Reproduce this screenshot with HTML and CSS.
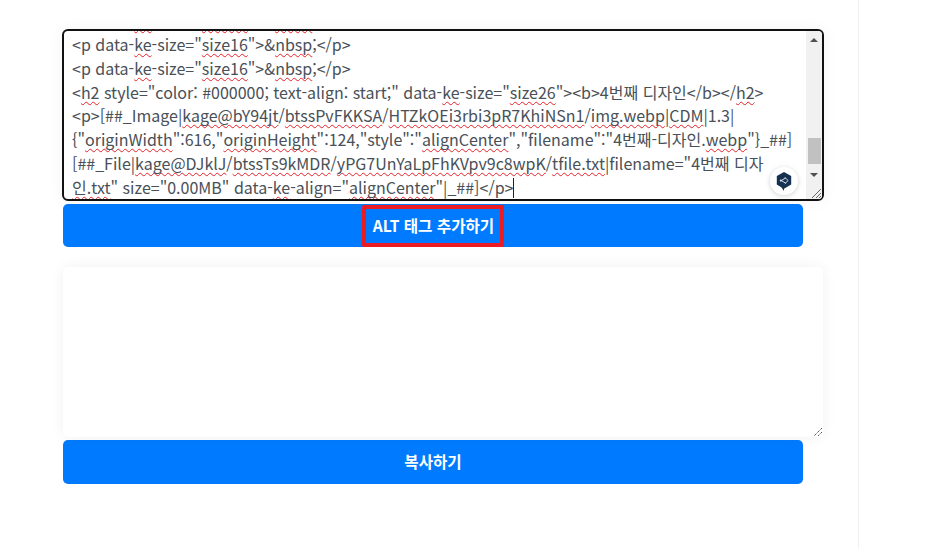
FILE: index.html
```html
<!DOCTYPE html>
<html lang="ko">
<head>
<meta charset="utf-8">
<title>ALT 태그 추가하기</title>
<link rel="stylesheet" href="styles.css">
</head>
<body>
<div class="page">
  <main class="main">
    <div class="editor">
      <div class="code">
        <div class="scrolled">
          <div class="line">&lt;p data-<span class="sp">ke</span>-size="<span class="sp">size16</span>"&gt;&amp;<span class="sp">nbsp</span>;&lt;/p&gt;</div>
          <div class="line">&lt;p data-<span class="sp">ke</span>-size="<span class="sp">size16</span>"&gt;&amp;<span class="sp">nbsp</span>;&lt;/p&gt;</div>
          <div class="line">&lt;p data-<span class="sp">ke</span>-size="<span class="sp">size16</span>"&gt;&amp;<span class="sp">nbsp</span>;&lt;/p&gt;</div>
          <div class="line">&lt;<span class="sp">h2</span> style="color: #000000; text-align: start;" data-<span class="sp">ke</span>-size="<span class="sp">size26</span>"&gt;&lt;b&gt;4번째 디자인&lt;/b&gt;&lt;/<span class="sp">h2</span>&gt;</div>
          <div class="line">&lt;p&gt;[##_Image|<span class="sp">kage@bY94jt</span>/<span class="sp">btssPvFKKSA</span>/<span class="sp">HTZkOEi3rbi3pR7KhiNSn1</span>/<span class="sp">img.webp</span>|<span class="sp">CDM</span>|1.3|</div>
          <div class="line">{"<span class="sp">originWidth</span>":616,"<span class="sp">originHeight</span>":124,"style":"<span class="sp">alignCenter</span>","filename":"4번째-디자인.<span class="sp">webp</span>"}_##]</div>
          <div class="line">[##_File|<span class="sp">kage@DJklJ</span>/<span class="sp">btssTs9kMDR</span>/<span class="sp">yPG7UnYaLpFhKVpv9c8wpK</span>/<span class="sp">tfile.txt</span>|filename="4번째 디자</div>
          <div class="line"><span class="sp">인.txt</span>" size="0.00MB" data-<span class="sp">ke</span>-align="<span class="sp">alignCenter</span>"|_##]&lt;/p&gt;<span class="caret"></span></div>
        </div>
      </div>
      <div class="scrollbar">
        <div class="arrow up"></div>
        <div class="track"><div class="thumb"></div></div>
        <div class="arrow down"></div>
        <div class="corner">
          <svg width="15" height="15" viewBox="0 0 15 15"><path d="M14 5 5 14M14 9 9 14M14 12 12 14" stroke="#666" stroke-width="1" fill="none"/></svg>
        </div>
      </div>
      <div class="badge">
        <svg width="20" height="22" viewBox="0 0 20 22">
          <path d="M10 1 18 5.5V15L10 19.5V22L7 18 2 15V5.5Z" fill="#16304f"/>
          <path d="M7 10.5 12 7.5M7 10.5 12 13.5M11 7 14.5 10.5 11 14" stroke="#d6e2ee" stroke-width="1.1" fill="none"/>
          <circle cx="6.5" cy="10.5" r="1.2" fill="#d6e2ee"/>
        </svg>
      </div>
    </div>
    <button class="btn btn-alt" type="button"><span class="btn-mark">ALT 태그 추가하기</span></button>
    <div class="output">
      <svg class="grip" width="10" height="10" viewBox="0 0 10 10"><path d="M9 1 1 9M9 5 5 9" stroke="#555" stroke-width="1" stroke-dasharray="1.4 .7" fill="none"/></svg>
    </div>
    <button class="btn btn-copy" type="button">복사하기</button>
  </main>
  <aside class="aside"></aside>
</div>
</body>
</html>
```
FILE: styles.css
```css
* { box-sizing: border-box; }
html, body { margin: 0; height: 100%; background: #fff; overflow: hidden; }
body { font-family: "Noto Sans CJK KR", "Noto Sans", sans-serif; }
.page { display: flex; height: 548px; }
.main { width: 858px; padding: 29px 0 0 62px; flex: none; }
.aside { flex: 1; border-left: 1px solid #f0f0f0; }
.editor {
  position: relative; display: flex; width: 762px; height: 172px;
  border: 2px solid #111; border-radius: 6px; background: #fff; overflow: hidden;
  box-shadow: 0 0 15px rgba(0,0,0,.05);
}
.code {
  flex: 1; min-width: 0; padding: 0 0 0 8px; color: #495057;
  font-size: 16px; line-height: 23.75px; overflow: hidden;
}
.scrolled { margin-top: -21.75px; }
.line { height: 23.75px; white-space: pre; }
.sp { text-decoration: underline wavy #e62129 1.4px; text-underline-offset: 1.5px; text-decoration-skip-ink: none; }
.caret { display: inline-block; width: 1px; height: 20px; background: #222; vertical-align: -4px; }
.scrollbar { width: 16px; flex: none; display: flex; flex-direction: column; background: #f1f1f1; }
.arrow { height: 17px; flex: none; display: flex; align-items: center; justify-content: center; }
.arrow::before { content: ""; border-left: 4px solid transparent; border-right: 4px solid transparent; }
.arrow.up::before { border-bottom: 4px solid #505050; }
.arrow.down::before { border-top: 4px solid #505050; }
.track { flex: 1; display: flex; flex-direction: column; justify-content: flex-end; padding: 0 1px 2px 2px; }
.thumb { height: 26px; background: #c1c1c1; }
.corner { height: 16px; flex: none; background: #f1f1f1; display: flex; align-items: flex-end; justify-content: flex-end; }
.corner svg { display: block; }
.badge {
  position: absolute; right: 24px; bottom: 4px; width: 28px; height: 28px; border-radius: 50%;
  background: #fff; box-shadow: 0 1px 5px rgba(0,0,0,.18);
  display: flex; align-items: center; justify-content: center;
}
.badge svg { display: block; width: 18px; height: 20px; }
.btn {
  display: flex; align-items: center; justify-content: center; width: 740px; margin: 0 0 0 1px;
  border: 0; border-radius: 5px; background: #007bff; color: #fff;
  font: 700 15.6px/1 "Noto Sans CJK KR", "Noto Sans", sans-serif;
}
.btn-alt { height: 43px; margin-top: 3px; }
.btn-mark { display: block; padding: 5px 6px 6px 7px; border: 4px solid #ec1c24; border-radius: 2px; line-height: 23px; }
.btn-copy { height: 44px; margin-top: 3px; }
.output {
  position: relative; width: 760px; height: 170px; margin: 20px 0 0 1px;
  background: #fff; border-radius: 5px; box-shadow: 0 0 15px rgba(0,0,0,.06);
}
.grip { position: absolute; right: 0; bottom: 0; display: block; }
```
